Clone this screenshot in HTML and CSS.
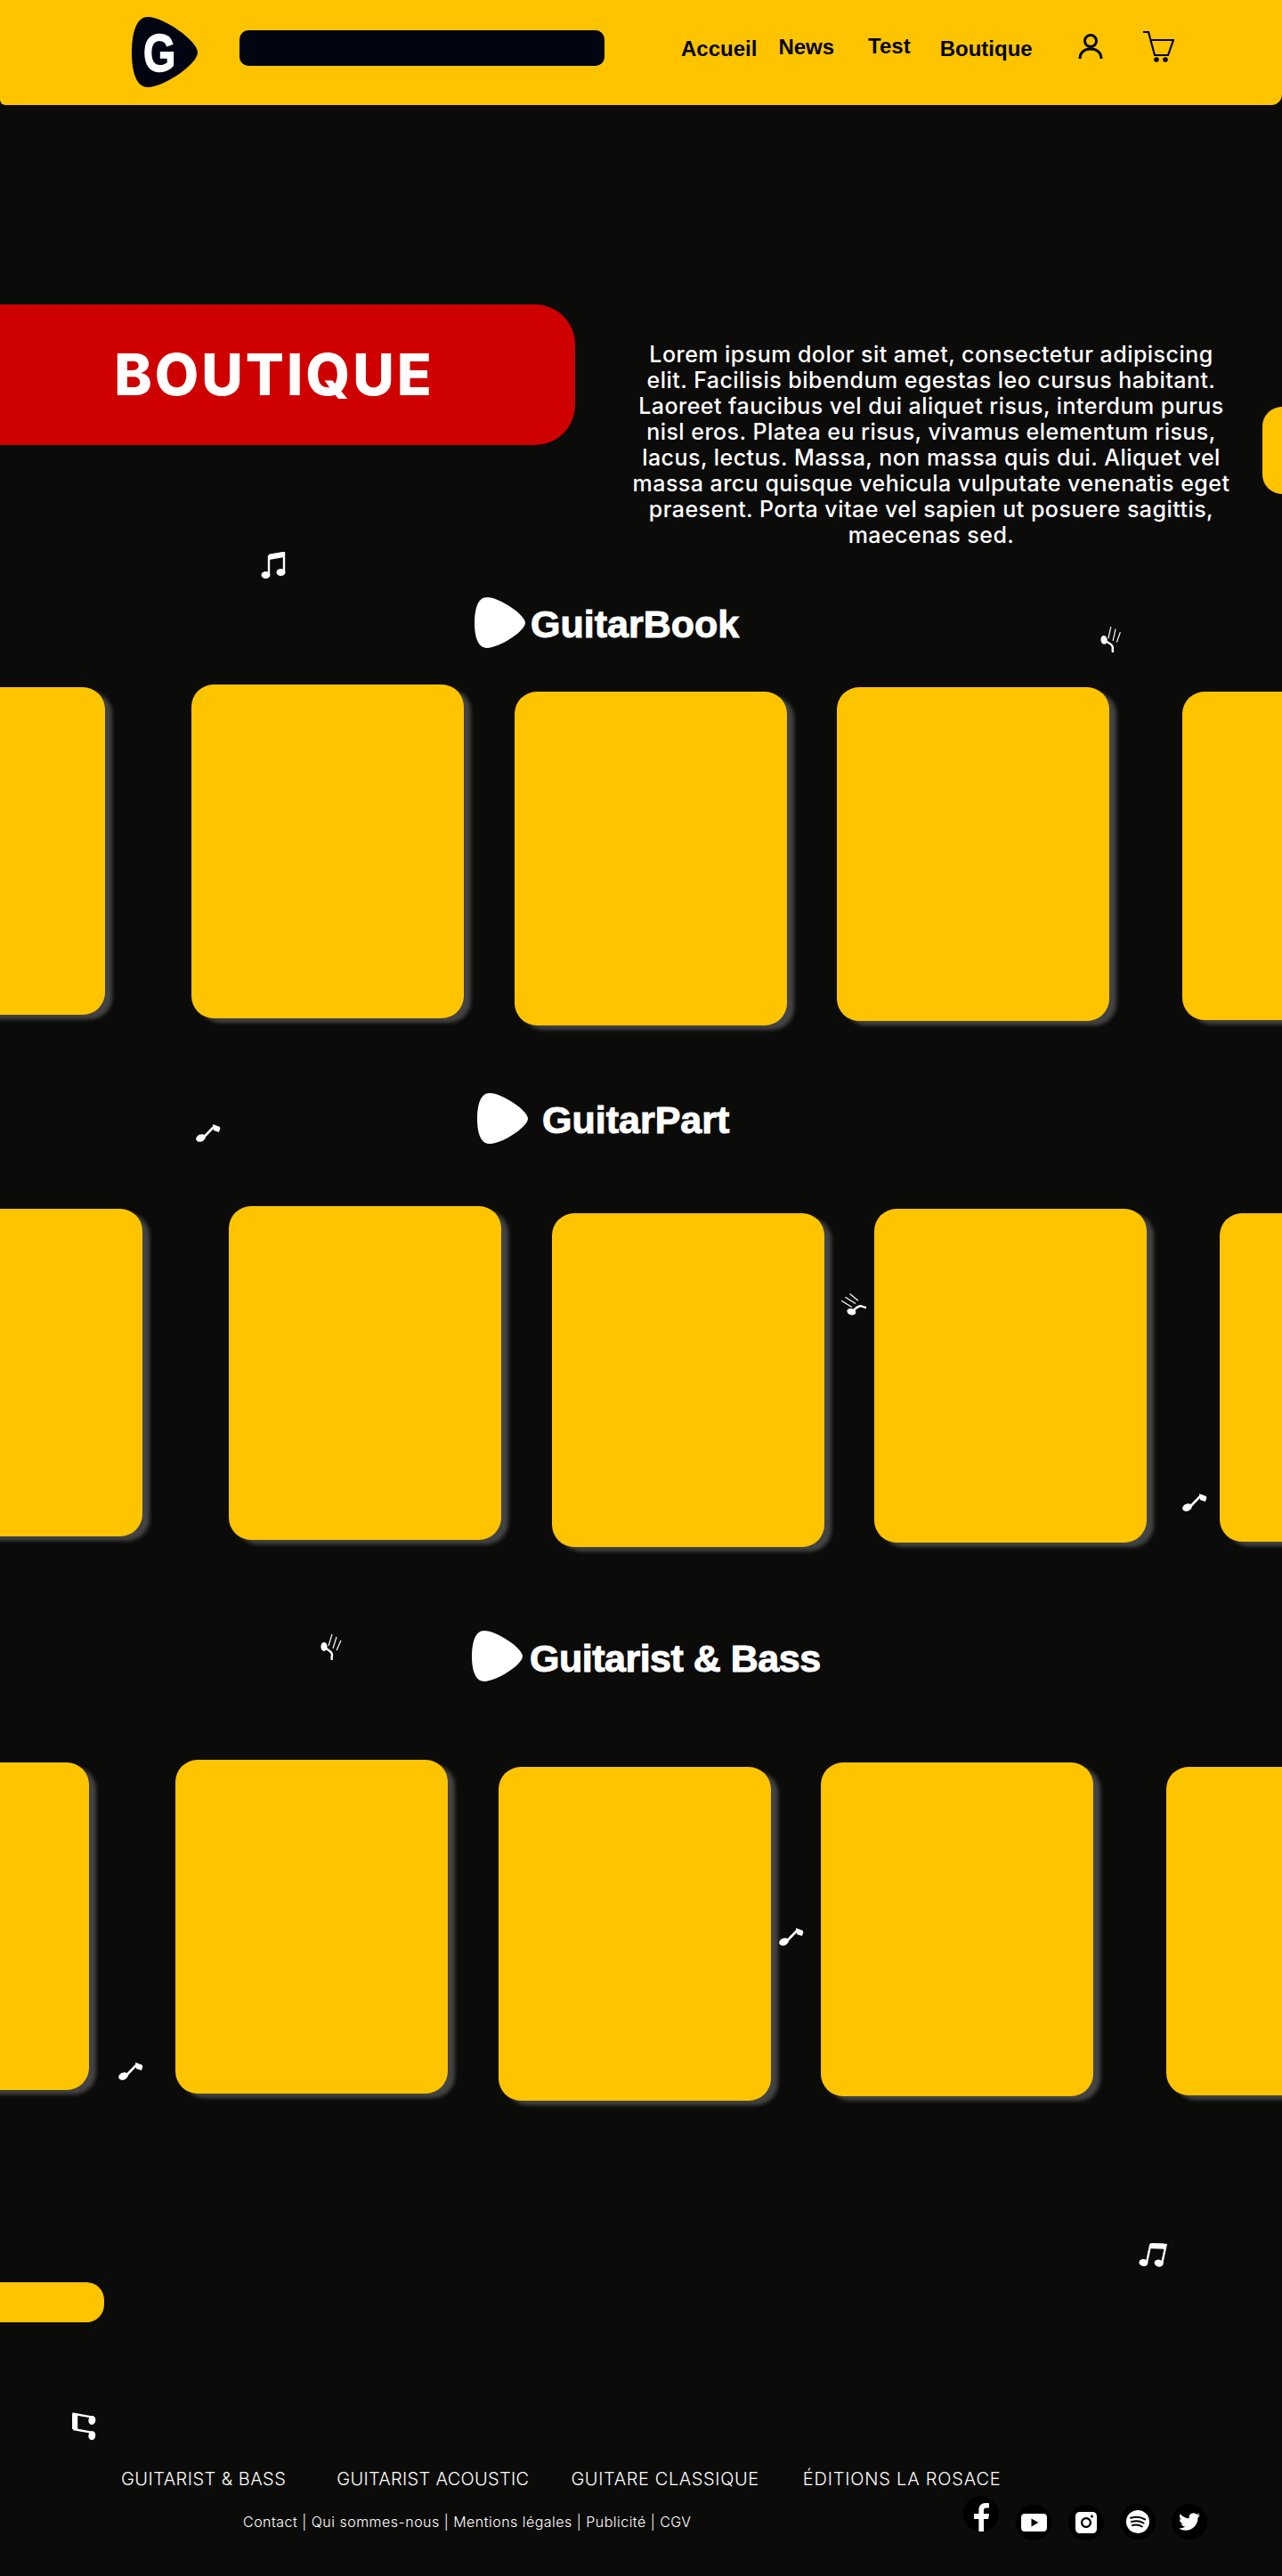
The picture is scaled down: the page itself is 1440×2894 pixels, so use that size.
FILE: index.html
```html
<!DOCTYPE html>
<html lang="fr">
  <head>
    <meta charset="UTF-8" />
    <meta name="viewport" content="width=device-width, initial-scale=1.0" />
    <title>Boutique</title>
    <link rel="stylesheet" href="styles.css">
  </head>
  <body>
    <svg class="defs" width="0" height="0">
      <defs>
        <symbol id="pick" viewBox="0 0 74 79" preserveAspectRatio="none">
          <path d="M18 0C36 0 74 27 74 40C74 53 36 79 18 79C5 79 0 62 0 40C0 18 5 0 18 0Z" />
        </symbol>
        <symbol id="beam" viewBox="0 0 28 30">
          <path d="M9 4L26 1V23" fill="none" stroke="currentColor" stroke-width="2.400" />
          <path d="M9 4V26" fill="none" stroke="currentColor" stroke-width="2.400" />
          <path d="M9 3L26 0V6L9 9Z" />
          <ellipse cx="5.500" cy="26" rx="5" ry="4" />
          <ellipse cx="22.500" cy="23" rx="5" ry="4" />
        </symbol>
        <symbol id="flag" viewBox="0 0 28 22">
          <ellipse cx="5.500" cy="17.500" rx="5.500" ry="4" transform="rotate(-25 5.500 17.500)" />
          <path d="M8.500 17L20 5L27 8" fill="none" stroke="currentColor" stroke-width="2.600" />
          <path d="M19 2L27 5L26 11L20 9Z" />
        </symbol>
        <symbol id="lines" viewBox="0 0 24 30">
          <ellipse cx="4" cy="15" rx="3.600" ry="5" />
          <path d="M4 15C8 19 13 20 13 24C13 26 12 28 13 30" fill="none" stroke="currentColor" stroke-width="2.400" />
          <path d="M9 14L13 1M14 17L18 4M18 19L23 8" fill="none" stroke="currentColor" stroke-width="1.200" />
        </symbol>
      </defs>
    </svg>

    <div class="page">
      <header class="topbar">
        <svg class="logo" viewBox="0 0 74 79">
          <use href="#pick" width="74" height="79" />
          <text class="logo-g" transform="translate(13 61) scale(.78 1)">G</text>
        </svg>
        <div class="searchbar"></div>
        <nav class="menu">
          <a class="menu-link accueil">Accueil</a>
          <a class="menu-link news">News</a>
          <a class="menu-link test">Test</a>
          <a class="menu-link shop">Boutique</a>
        </nav>
        <svg class="user-icon" viewBox="0 0 28 30" fill="none" stroke="currentColor" stroke-width="3">
          <circle cx="14" cy="8" r="6.500" />
          <path d="M2 28C2 21 7 17 14 17C21 17 26 21 26 28" />
        </svg>
        <svg class="cart-icon" viewBox="0 0 36 38" fill="none" stroke="currentColor" stroke-width="2.200">
          <path d="M1 2H7L14 28H29L35 11H10" />
          <circle cx="16" cy="33" r="2.800" fill="currentColor" stroke="none" />
          <circle cx="26" cy="33" r="2.800" fill="currentColor" stroke="none" />
        </svg>
      </header>

      <section class="hero">
        <div class="hero-title"><h1>BOUTIQUE</h1></div>
        <p class="hero-text">
          Lorem ipsum dolor sit amet, consectetur adipiscing<br>
          elit. Facilisis bibendum egestas leo cursus habitant.<br>
          Laoreet faucibus vel dui aliquet risus, interdum purus<br>
          nisl eros. Platea eu risus, vivamus elementum risus,<br>
          lacus, lectus. Massa, non massa quis dui. Aliquet vel<br>
          massa arcu quisque vehicula vulputate venenatis eget<br>
          praesent. Porta vitae vel sapien ut posuere sagittis,<br>
          maecenas sed.
        </p>
        <div class="hero-tab"></div>
      </section>

      <section class="shelf shelf-book">
        <div class="shelf-head">
          <svg class="pick"><use href="#pick" width="57" height="57" /></svg>
          <h2 class="shelf-title">GuitarBook</h2>
        </div>
        <div class="cards">
          <div class="card card-a"></div>
          <div class="card card-b"></div>
          <div class="card card-c"></div>
          <div class="card card-d"></div>
          <div class="card card-e"></div>
        </div>
      </section>

      <section class="shelf shelf-part">
        <div class="shelf-head">
          <svg class="pick"><use href="#pick" width="57" height="57" /></svg>
          <h2 class="shelf-title">GuitarPart</h2>
        </div>
        <div class="cards">
          <div class="card card-a"></div>
          <div class="card card-b"></div>
          <div class="card card-c"></div>
          <div class="card card-d"></div>
          <div class="card card-e"></div>
        </div>
      </section>

      <section class="shelf shelf-bass">
        <div class="shelf-head">
          <svg class="pick"><use href="#pick" width="57" height="57" /></svg>
          <h2 class="shelf-title">Guitarist &amp; Bass</h2>
        </div>
        <div class="cards">
          <div class="card card-a"></div>
          <div class="card card-b"></div>
          <div class="card card-c"></div>
          <div class="card card-d"></div>
          <div class="card card-e"></div>
        </div>
      </section>

      <div class="more-pill"></div>

      <footer class="footer">
        <div class="footer-links">
          <a class="bass">GUITARIST &amp; BASS</a>
          <a class="acoustic">GUITARIST ACOUSTIC</a>
          <a class="classic">GUITARE CLASSIQUE</a>
          <a class="rosace">ÉDITIONS LA ROSACE</a>
        </div>
        <div class="footer-bottom">
          <p class="legal">Contact | Qui sommes-nous | Mentions légales | Publicité | CGV</p>
          <div class="socials">
            <a class="social fb">
              <svg viewBox="0 0 17 32"><path d="M11 32V18H16.200L17 12H11V8.500C11 6.800 11.600 5.600 14 5.600H17V.3C16.400.2 14.800 0 13 0C8.500 0 5.400 2.800 5.400 7.800V12H0V18H5.400V32Z" /></svg>
            </a>
            <a class="social low">
              <svg class="yt" viewBox="0 0 29 20"><path d="M4 0H25C27.500 0 29 1.500 29 4V16C29 18.500 27.500 20 25 20H4C1.500 20 0 18.500 0 16V4C0 1.500 1.500 0 4 0ZM11.500 5.500V14.500L19.500 10Z" fill-rule="evenodd" /></svg>
            </a>
            <a class="social low">
              <svg class="ig" viewBox="0 0 24 24"><path d="M5 0H19C22 0 24 2 24 5V19C24 22 22 24 19 24H5C2 24 0 22 0 19V5C0 2 2 0 5 0ZM12 6C8.700 6 6 8.700 6 12S8.700 18 12 18S18 15.300 18 12S15.300 6 12 6ZM12 8.200C14.100 8.200 15.800 9.900 15.800 12S14.100 15.800 12 15.800S8.200 14.100 8.200 12S9.900 8.200 12 8.200ZM18.500 3.500C17.700 3.500 17 4.200 17 5S17.700 6.500 18.500 6.500S20 5.800 20 5S19.300 3.500 18.500 3.500Z" fill-rule="evenodd" /></svg>
            </a>
            <a class="social mid">
              <svg class="sp" viewBox="0 0 26 26">
                <circle cx="13" cy="13" r="13" />
                <path d="M5 8.800C10 7.400 16.500 7.800 21 10.400M6 13C10.500 11.800 15.500 12.200 19.500 14.500M7 17C10.500 16.200 14.500 16.500 17.800 18.500" fill="none" stroke="#000" stroke-width="2" stroke-linecap="round" />
              </svg>
            </a>
            <a class="social mid">
              <svg class="tw" viewBox="0 0 24 24"><path d="M23.953 4.57a10 10 0 01-2.825.775 4.958 4.958 0 002.163-2.723c-.951.555-2.005.959-3.127 1.184a4.92 4.92 0 00-8.384 4.482C7.69 8.095 4.067 6.13 1.64 3.162a4.822 4.822 0 00-.666 2.475c0 1.71.87 3.213 2.188 4.096a4.904 4.904 0 01-2.228-.616v.06a4.923 4.923 0 003.946 4.827 4.996 4.996 0 01-2.212.085 4.936 4.936 0 004.604 3.417 9.867 9.867 0 01-6.102 2.105c-.39 0-.779-.023-1.17-.067a13.995 13.995 0 007.557 2.209c9.053 0 13.998-7.496 13.998-13.985 0-.21 0-.42-.015-.63A9.935 9.935 0 0024 4.59z" /></svg>
            </a>
          </div>
        </div>
      </footer>

      <!-- notes scattered over the page -->
      <svg class="note note-1"><use href="#beam" width="28" height="30" /></svg>
      <svg class="note note-2"><use href="#lines" width="24" height="30" /></svg>
      <svg class="note note-3"><use href="#flag" width="28" height="22" /></svg>
      <svg class="note note-4"><use href="#lines" width="24" height="30" /></svg>
      <svg class="note note-5"><use href="#flag" width="28" height="22" /></svg>
      <svg class="note note-6"><use href="#lines" width="24" height="30" /></svg>
      <svg class="note note-7"><use href="#flag" width="28" height="22" /></svg>
      <svg class="note note-8"><use href="#flag" width="28" height="22" /></svg>
      <svg class="note note-9"><use href="#beam" width="28" height="30" /></svg>
      <svg class="note note-10"><use href="#beam" width="28" height="30" /></svg>
    </div>
  </body>
</html>
```

FILE: styles.css
```css
body {
  margin: 0;
  background-color: #0b0b09;
  color: white;
  font-family: "Inter", "Liberation Sans", sans-serif;
}
h1,
h2,
p {
  margin: 0;
}
.defs {
  position: absolute;
}
.page {
  position: relative;
  width: 1440px;
  height: 2894px;
  overflow: hidden;
}

/* top bar */
.topbar {
  display: flex;
  align-items: flex-start;
  height: 118px;
  padding-left: 148px;
  box-sizing: border-box;
  background-color: #ffc400;
  border-radius: 0 0 12px 6px;
  color: #000511;
}
.logo {
  width: 74px;
  height: 79px;
  margin-top: 19px;
  fill: #000511;
}
.logo-g {
  font-family: "Liberation Sans", sans-serif;
  font-size: 60px;
  font-weight: bold;
  fill: white;
  stroke: white;
  stroke-width: 1.5px;
}
.searchbar {
  width: 410px;
  height: 40px;
  margin: 34px 0 0 47px;
  background-color: #000511;
  border-radius: 10px;
}
.menu {
  display: flex;
  align-items: flex-start;
  margin-left: 86px;
  font-family: "Liberation Sans", sans-serif;
  font-size: 24px;
  font-weight: bold;
  line-height: 28px;
}
.accueil {
  margin-top: 41px;
}
.news {
  margin: 39px 0 0 24px;
}
.test {
  margin: 38px 0 0 38px;
}
.shop {
  margin: 41px 0 0 33px;
}
.user-icon {
  width: 28px;
  height: 30px;
  margin: 38px 0 0 51px;
}
.cart-icon {
  width: 36px;
  height: 38px;
  margin: 34px 0 0 44px;
}

/* hero */
.hero {
  display: flex;
  align-items: flex-start;
  margin-top: 224px;
}
.hero-title {
  display: flex;
  align-items: center;
  justify-content: center;
  width: 646px;
  height: 158px;
  padding-right: 30px;
  box-sizing: border-box;
  background-color: #cf0000;
  border-radius: 0 45px 45px 0;
}
.hero-title h1 {
  font-size: 64px;
  font-weight: 800;
  line-height: 78px;
  letter-spacing: 3px;
}
.hero-text {
  flex: none;
  width: 674px;
  margin: 42px 0 0 63px;
  font-size: 25px;
  font-weight: 500;
  line-height: 29px;
  letter-spacing: .46px;
  text-align: center;
  white-space: nowrap;
}
.hero-tab {
  flex: none;
  width: 22px;
  height: 98px;
  margin: 115px 0 0 35px;
  background-color: #ffc400;
  border-radius: 22px 0 0 22px;
}

/* product shelves */
.shelf-head {
  display: flex;
  align-items: flex-start;
}
.pick {
  width: 57px;
  height: 57px;
  fill: white;
}
.shelf-title {
  font-family: "Liberation Sans", sans-serif;
  font-size: 43px;
  font-weight: bold;
  line-height: 50px;
  -webkit-text-stroke: 1px white;
}
.cards {
  display: flex;
  align-items: flex-start;
}
.card {
  flex: none;
  width: 306px;
  height: 375px;
  background-color: #ffc400;
  border-radius: 25px;
  box-shadow: 8px 5px 4px #444;
}
.card-a {
  height: 368px;
  margin-top: 3px;
}
.card-b {
  margin-left: 97px;
}
.card-c {
  margin: 8px 0 0 57px;
}
.card-d {
  margin: 3px 0 0 56px;
}
.card-e {
  height: 369px;
  margin: 8px 0 0 82px;
}
.shelf-book {
  margin-top: 55px;
}
.shelf-book .shelf-head {
  padding-left: 533px;
}
.shelf-book .shelf-title {
  margin: 5px 0 0 6px;
}
.shelf-book .cards {
  margin: 41px 0 0 -188px;
}
.shelf-part {
  margin-top: 76px;
}
.shelf-part .shelf-head {
  padding-left: 536px;
}
.shelf-part .shelf-title {
  margin: 5px 0 0 16px;
}
.shelf-part .cards {
  margin: 70px 0 0 -146px;
}
.shelf-bass {
  margin-top: 94px;
}
.shelf-bass .shelf-head {
  padding-left: 530px;
}
.shelf-bass .shelf-title {
  margin: 6px 0 0 8px;
  letter-spacing: -.5px;
}
.shelf-bass .cards {
  margin: 88px 0 0 -206px;
}
.more-pill {
  width: 117px;
  height: 45px;
  margin-top: 204px;
  background-color: #ffc400;
  border-radius: 0 20px 20px 0;
}

/* footer */
.footer {
  margin-top: 164px;
}
.footer-links {
  display: flex;
  padding-left: 136px;
  font-size: 20px;
  font-weight: 300;
  line-height: 24px;
  letter-spacing: .45px;
}
.acoustic {
  margin-left: 57px;
  letter-spacing: .3px;
}
.classic {
  margin-left: 47px;
  letter-spacing: .6px;
}
.rosace {
  margin-left: 49px;
  letter-spacing: .8px;
}
.footer-bottom {
  display: flex;
  align-items: flex-start;
  margin-top: 7px;
  padding: 0 84px 0 273px;
}
.legal {
  margin-top: 19px;
  font-size: 16px;
  font-weight: 300;
  line-height: 20px;
  letter-spacing: .48px;
}
.socials {
  display: flex;
  align-items: flex-start;
  gap: 19px;
  margin-left: auto;
}
.social {
  display: flex;
  align-items: center;
  justify-content: center;
  width: 40px;
  height: 40px;
  background-color: black;
  border-radius: 50%;
  fill: white;
}
.low {
  margin-top: 10px;
}
.mid {
  margin: 9px 0 0 -1px;
}
.fb {
  align-items: flex-end;
}
.fb svg {
  width: 17px;
  height: 32px;
}
.yt {
  width: 29px;
  height: 20px;
}
.ig {
  width: 24px;
  height: 24px;
}
.sp {
  width: 26px;
  height: 26px;
}
.tw {
  width: 24px;
  height: 24px;
}

/* decorative notes */
.note {
  position: absolute;
  width: 28px;
  height: 30px;
  fill: white;
  color: white;
}
.note-1 {
  left: 293px;
  top: 620px;
}
.note-2 {
  left: 1236px;
  top: 703px;
  transform: rotate(-5deg);
}
.note-3 {
  left: 220px;
  top: 1261px;
}
.note-4 {
  left: 945px;
  top: 1449px;
  transform: rotate(-75deg);
}
.note-5 {
  left: 1328px;
  top: 1676px;
}
.note-6 {
  left: 360px;
  top: 1835px;
}
.note-7 {
  left: 875px;
  top: 2164px;
}
.note-8 {
  left: 133px;
  top: 2315px;
}
.note-9 {
  left: 1281px;
  top: 2518px;
  transform: rotate(12deg);
}
.note-10 {
  left: 80px;
  top: 2711px;
  transform: rotate(-80deg);
}
```
